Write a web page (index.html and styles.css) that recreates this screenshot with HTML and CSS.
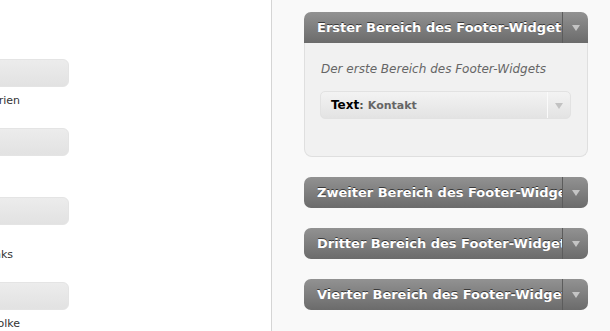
FILE: index.html
```html
<!DOCTYPE html>
<html lang="de">
  <head>
    <meta charset="UTF-8" />
    <title>Widgets</title>
    <meta name="viewport" content="width=device-width, initial-scale=1.0" />
    <link rel="stylesheet" href="styles.css">
  </head>
  <body>
    <div class="page">
      <div class="available">
        <div class="item">
          <div class="item-btn"></div>
          <div class="desc">
            <div class="line">Eine Liste der Kategorien</div>
          </div>
        </div>
        <div class="item">
          <div class="item-btn"></div>
          <div class="desc">
            <div class="line hidden-line">Eigene Menüs</div>
          </div>
        </div>
        <div class="item">
          <div class="item-btn"></div>
          <div class="desc">
            <div class="line hidden-line">Deine Blogroll und</div>
            <div class="line short">weitere Links</div>
          </div>
        </div>
        <div class="item">
          <div class="item-btn"></div>
          <div class="desc">
            <div class="line">Deine Schlagwortwolke</div>
          </div>
        </div>
      </div>

      <div class="sidebars">
        <div class="widget open">
          <div class="widget-top">
            <div class="widget-title">Erster Bereich des Footer-Widgets</div>
            <div class="widget-action"><span class="arrow"></span></div>
          </div>
          <div class="widget-inside">
            <p class="sidebar-desc">Der erste Bereich des Footer-Widgets</p>
            <div class="widget-select">
              <div class="select-title">Text<span class="colon">:</span> <span class="in-title">Kontakt</span></div>
              <div class="select-action"><span class="arrow light"></span></div>
            </div>
          </div>
        </div>

        <div class="widget">
          <div class="widget-top">
            <div class="widget-title">Zweiter Bereich des Footer-Widgets</div>
            <div class="widget-action"><span class="arrow"></span></div>
          </div>
        </div>

        <div class="widget">
          <div class="widget-top">
            <div class="widget-title">Dritter Bereich des Footer-Widgets</div>
            <div class="widget-action"><span class="arrow"></span></div>
          </div>
        </div>

        <div class="widget">
          <div class="widget-top">
            <div class="widget-title">Vierter Bereich des Footer-Widgets</div>
            <div class="widget-action"><span class="arrow"></span></div>
          </div>
        </div>
      </div>
    </div>
  </body>
</html>
```

FILE: styles.css
```css
body {
  font-family: "DejaVu Sans", Verdana, sans-serif;
  margin: 0;
  padding: 0;
  overflow: hidden;
}

.page {
  display: flex;
  height: 100vh;
}

.available {
  flex-shrink: 0;
  width: 271px;
  background-color: #fff;
  border-right: 1px solid #d5d5d5;
  padding-top: 59px;
  overflow: hidden;
}

.item {
  margin-bottom: 19px;
}

.item-btn {
  margin-left: -131px;
  width: 198px;
  height: 26px;
  border: 1px solid #e4e4e4;
  border-radius: 6px;
  background: linear-gradient(#ececec, #e2e2e2);
}

.desc {
  margin-top: 6px;
  margin-left: -220px;
  width: 240px;
  font-size: 11px;
  line-height: 16px;
  color: #333;
}

.line {
  text-align: right;
  white-space: nowrap;
}

.line.short {
  padding-right: 7px;
}

.hidden-line {
  padding-right: 40px;
}

.sidebars {
  flex: 1;
  min-width: 0;
  background-color: #f9f9f9;
  padding: 12px 22px 0 32px;
}

.widget {
  margin-bottom: 20px;
}

.widget-top {
  display: flex;
  height: 31px;
  border-radius: 7px;
  background: linear-gradient(#929292, #6b6b6b);
}

.widget.open .widget-top {
  border-radius: 7px 7px 0 0;
}

.widget-title {
  flex: 1;
  min-width: 0;
  overflow: hidden;
  white-space: nowrap;
  padding-left: 13px;
  font-size: 13px;
  font-weight: bold;
  line-height: 31px;
  color: #fff;
  text-shadow: 0 -1px 0 #3a3a3a;
}

.widget-action {
  flex-shrink: 0;
  width: 25px;
  border-left: 1px solid #5c5c5c;
  display: flex;
  align-items: center;
  justify-content: center;
}

.arrow {
  width: 0;
  height: 0;
  border-left: 4px solid transparent;
  border-right: 4px solid transparent;
  border-top: 6px solid #c4c4c4;
  margin-top: 1px;
}

.arrow.light {
  border-top-color: #c2c2c2;
}

.widget-inside {
  background-color: #f1f1f1;
  border: 1px solid #dfdfdf;
  border-top: none;
  border-radius: 0 0 8px 8px;
  padding: 18px 16px 37px 15px;
}

.sidebar-desc {
  margin: 0 0 14px 1px;
  font-size: 12px;
  font-style: italic;
  line-height: 16px;
  color: #666;
}

.widget-select {
  display: flex;
  height: 26px;
  border: 1px solid #e2e2e2;
  border-radius: 5px;
  background: linear-gradient(#f3f3f3, #e3e3e3);
}

.select-title {
  flex: 1;
  min-width: 0;
  padding-left: 10px;
  font-size: 12px;
  font-weight: bold;
  line-height: 26px;
  color: #000;
  white-space: nowrap;
}

.colon {
  font-size: 11px;
  color: #555;
}

.in-title {
  font-size: 11px;
  color: #666;
}

.select-action {
  flex-shrink: 0;
  width: 22px;
  border-left: 1px solid #fafafa;
  display: flex;
  align-items: center;
  justify-content: center;
}
```
